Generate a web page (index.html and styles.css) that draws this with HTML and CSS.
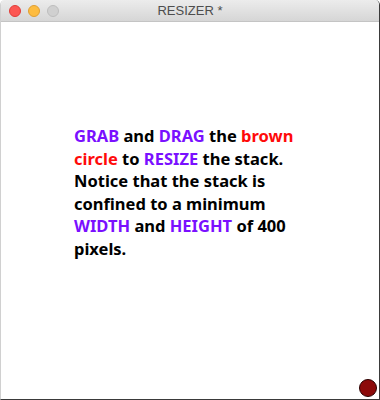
FILE: index.html
```html
<!DOCTYPE html>
<html lang="en">
<head>
    <meta charset="UTF-8">
    <title>RESIZER *</title>
    <link rel="stylesheet" href="styles.css">
</head>
<body>

<div class="window">
    <div class="titlebar">
        <div class="lights">
            <span class="light close"></span>
            <span class="light min"></span>
            <span class="light max"></span>
        </div>
        <div class="title">RESIZER *</div>
    </div>
    <div class="content">
        <p class="note"><span class="purple">GRAB</span> and <span class="purple">DRAG</span> the <span class="red">brown circle</span> to <span class="purple">RESIZE</span> the stack. Notice that the stack is confined to a minimum <span class="purple">WIDTH</span> and <span class="purple">HEIGHT</span> of 400 pixels.</p>
        <div class="grip"></div>
    </div>
</div>

</body>
</html>
```

FILE: styles.css
```css
html, body {
    margin: 0;
    padding: 0;
    background-color: #ffffff;
}
.window {
    width: 378px;
    height: 399px;
    border-left: 1px solid #d0d0d0;
    border-right: 1px solid #3a3a3a;
    border-bottom: 1px solid #3a3a3a;
    border-radius: 5px 5px 0 0;
    display: flex;
    flex-direction: column;
    overflow: hidden;
}
.titlebar {
    height: 21px;
    flex: none;
    display: flex;
    align-items: center;
    position: relative;
    background: linear-gradient(#ececec, #d6d6d6);
    border-bottom: 1px solid #c4c4c4;
}
.lights {
    display: flex;
    gap: 7px;
    padding-left: 8px;
}
.light {
    width: 12px;
    height: 12px;
    border-radius: 50%;
    box-sizing: border-box;
}
.close {
    background-color: #fc5753;
    border: 1px solid #df3d39;
}
.min {
    background-color: #fdbc40;
    border: 1px solid #de9f34;
}
.max {
    background-color: #d0d0d0;
    border: 1px solid #bdbdbd;
}
.title {
    position: absolute;
    left: 0;
    right: 0;
    text-align: center;
    font-family: "Liberation Sans", Arial, sans-serif;
    font-size: 13px;
    color: #4d4d4d;
}
.content {
    flex: 1;
    position: relative;
    padding: 103px 0 0 73px;
}
.note {
    margin: 0;
    width: 240px;
    font-family: "Noto Sans", sans-serif;
    font-weight: bold;
    font-size: 16.5px;
    line-height: 22.5px;
    color: #000000;
}
.purple {
    color: #7a10ff;
}
.red {
    color: #ff0a0a;
}
.grip {
    position: absolute;
    right: 2px;
    bottom: 2px;
    width: 18px;
    height: 18px;
    border-radius: 50%;
    background-color: #8c0a0a;
    border: 1px solid #2a0000;
    box-sizing: border-box;
}
```
